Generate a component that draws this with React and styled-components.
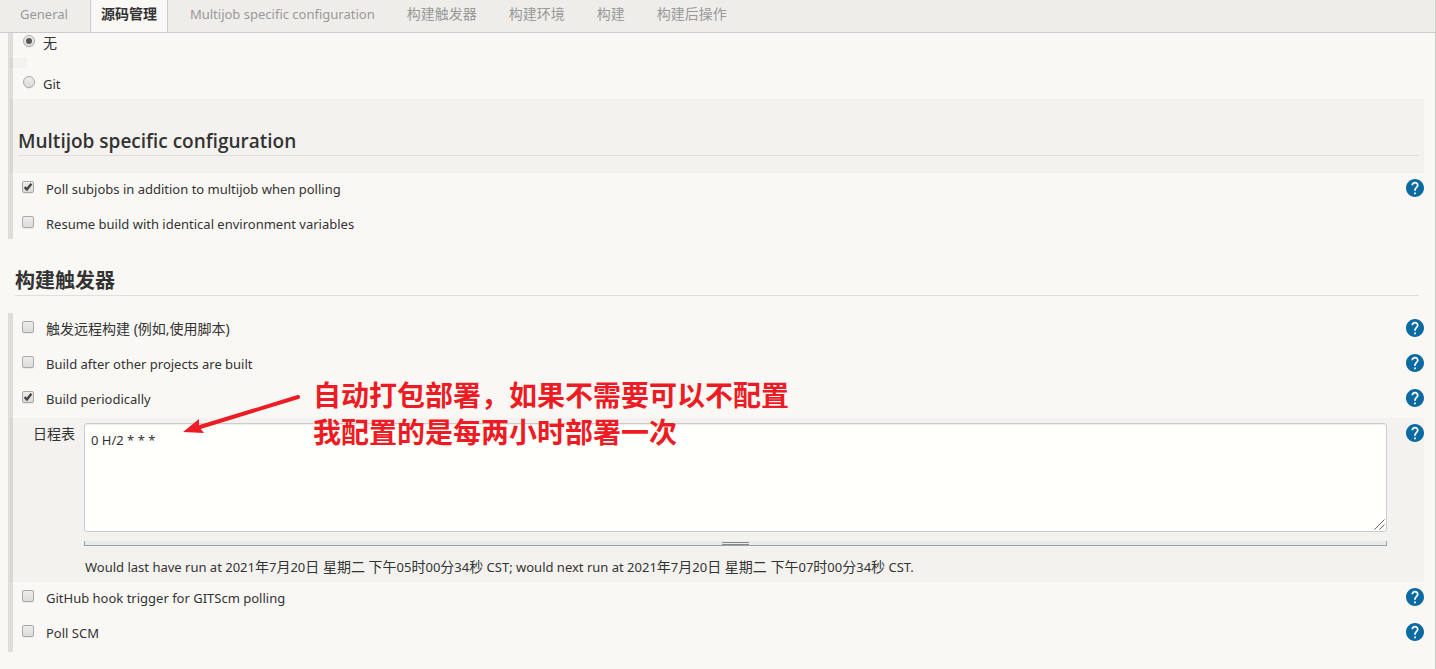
import React, { useState } from 'react';
import styled, { createGlobalStyle, css } from 'styled-components';

const colors = {
	page: '#f9f8f4',
	nav: '#eeede9',
	line: '#cccccc',
	rule: '#dfdeda',
	shade: 'rgba(0, 0, 0, 0.025)',
	text: '#333333',
	muted: '#999999',
	help: '#0b6aa2',
	note: '#ed1c24'
};

const GlobalStyle = createGlobalStyle`
	* {
		box-sizing: border-box;
	}

	body {
		margin: 0;
		background: ${colors.page};
		color: ${colors.text};
		font-family: 'Noto Sans', 'Noto Sans CJK SC', sans-serif;
		font-size: 13px;
		line-height: 20px;
	}
`;

const Page = styled.div`
	min-height: 100vh;
	border-right: 1px solid ${colors.line};
`;

const Tabs = styled.nav`
	position: sticky;
	top: 0;
	z-index: 2;
	display: flex;
	gap: 12px;
	height: 33px;
	padding-left: 10px;
	background: ${colors.nav};
	border-bottom: 1px solid ${colors.line};
`;

const Tab = styled.a`
	padding: 4px 10px 0;
	color: ${colors.muted};
	font-size: ${(props) => (props.$cjk ? '14px' : '13px')};
	text-decoration: none;
	white-space: nowrap;

	${(props) =>
		props.$active &&
		css`
			background: ${colors.page};
			border: solid ${colors.line};
			border-width: 0 1px;
			color: ${colors.text};
			font-weight: 700;
		`};
`;

/* the first rows are scrolled a little under the tabs */
const Form = styled.form`
	margin: -6px 11px 0 8px;
`;

const Section = styled.section`
	border-left: 5px solid ${colors.rule};
`;

const shaded = css`
	background: ${colors.shade};
	box-shadow: -3px 0 0 ${colors.shade};
`;

const TitleBar = styled.div`
	height: 74px;
	padding: 0 5px 17px;
	${(props) => (props.$shaded ? shaded : 'padding-left: 7px;')};
`;

const Title = styled.h2`
	display: flex;
	align-items: flex-end;
	height: 57px;
	margin: 0;
	padding-bottom: 1px;
	border-bottom: 1px solid ${colors.rule};
	font-family: 'Open Sans', 'Noto Sans CJK SC', sans-serif;
	font-size: ${(props) => (props.$cjk ? '20px' : '19px')};
	font-weight: ${(props) => (props.$cjk ? 700 : 600)};
	line-height: 26px;
`;

const Row = styled.div`
	display: flex;
	align-items: flex-start;
	height: ${(props) => (props.$help ? '35px' : '31px')};
	padding: 5px 0 0 ${(props) => (props.$radio ? '10px' : '9px')};
`;

const RowLabel = styled.label`
	flex: 1;
	padding: 1px 0 0 ${(props) => (props.$radio ? '8px' : '12px')};
	font-size: ${(props) => (props.$cjk ? '14px' : '13px')};
`;

const Spacer = styled.div`
	width: 14px;
	height: 10px;
	${shaded};
`;

const Box = styled.span`
	display: grid;
	width: 12px;
	height: 12px;
	margin-top: 3px;

	> * {
		grid-area: 1 / 1;
	}

	svg {
		pointer-events: none;
	}
`;

const Check = styled.input`
	appearance: none;
	width: 12px;
	height: 12px;
	margin: 0;
	border: 1px solid #a9a9a7;
	border-radius: ${(props) => (props.type === 'radio' ? '50%' : '2px')};
	background: linear-gradient(#ededeb, #dcdcda);
	box-shadow: 0 1px 0 rgba(0, 0, 0, 0.06);
`;

const HelpLink = styled.a`
	display: block;
	margin-top: 1px;
	color: ${colors.help};

	svg {
		display: block;
	}
`;

const Schedule = styled.div`
	position: relative;
	display: flex;
	align-items: flex-start;
	padding: 5px 0;
	${shaded};
`;

const ScheduleLabel = styled.label`
	width: 71px;
	padding: 1px 9px 0 0;
	font-size: 14px;
	text-align: right;
`;

const Field = styled.div`
	flex: 1;
	margin-right: 19px;
`;

const SpecBox = styled.div`
	position: relative;
`;

const Spec = styled.textarea`
	display: block;
	width: 100%;
	height: 109px;
	padding: 6px;
	border: 1px solid ${colors.line};
	border-radius: 3px;
	outline: none;
	background: #fffffc;
	box-shadow: inset 0 1px 1px rgba(0, 0, 0, 0.07);
	color: ${colors.text};
	font: inherit;
	resize: vertical;

	&::-webkit-resizer {
		background: transparent;
	}
`;

const Corner = styled.svg`
	position: absolute;
	right: 2px;
	bottom: 2px;
	pointer-events: none;
`;

const ResizeBar = styled.div`
	display: flex;
	justify-content: center;
	height: 5px;
	margin: 9px 0 11px;
	border: solid #98a3a8;
	border-width: 0 1px 1px;
	background: #e9ebea;
`;

const Grip = styled.span`
	width: 27px;
	height: 3px;
	margin-top: 1px;
	border: solid #888888;
	border-width: 1px 0;
`;

const RunTimes = styled.div`
	padding-left: 1px;
`;

const Cjk = styled.span`
	font-size: 14px;
`;

const Note = styled.div`
	position: absolute;
	top: -41px;
	left: 300px;
	z-index: 1;
	color: ${colors.note};
	font-size: 28px;
	font-weight: 700;
	line-height: 37px;
	white-space: nowrap;
	pointer-events: none;
`;

const Arrow = styled.svg`
	position: absolute;
	top: -26px;
	left: 169px;
	z-index: 1;
	pointer-events: none;
`;

const Help = () => (
	<HelpLink href="#help" aria-label="Help">
		<svg width="18" height="18" viewBox="2 2 20 20" fill="currentColor">
			<circle cx="12" cy="12" r="9" fill="#fff" />
			<path d="M12 2C6.48 2 2 6.48 2 12s4.48 10 10 10 10-4.48 10-10S17.52 2 12 2zm1 17h-2v-2h2v2zm2.07-7.75l-.9.92C13.45 12.9 13 13.5 13 15h-2v-.5c0-1.1.45-2.1 1.17-2.83l1.24-1.26c.37-.36.59-.86.59-1.41 0-1.1-.9-2-2-2s-2 .9-2 2H8c0-2.21 1.79-4 4-4s4 1.79 4 4c0 .88-.36 1.68-.93 2.25z" />
		</svg>
	</HelpLink>
);

const CheckRow = ({ id, label, cjk, help, defaultChecked }) => {
	const [checked, setChecked] = useState(!!defaultChecked);
	return (
		<Row $help={help}>
			<Box>
				<Check id={id} type="checkbox" checked={checked} onChange={() => setChecked(!checked)} />
				{checked ? (
					<svg width="12" height="12" viewBox="0 0 12 12" fill="none" stroke="#444" strokeWidth="2.4">
						<path d="M2.6 6.2l2.3 2.2L9.4 2.8" />
					</svg>
				) : null}
			</Box>
			<RowLabel htmlFor={id} $cjk={cjk}>
				{label}
			</RowLabel>
			{help ? <Help /> : null}
		</Row>
	);
};

const RadioRow = ({ id, label, cjk, checked, onChange }) => (
	<Row $radio>
		<Box>
			<Check id={id} type="radio" name="scm" checked={checked} onChange={onChange} />
			{checked ? (
				<svg width="12" height="12" viewBox="0 0 12 12">
					<circle cx="6" cy="6" r="3" fill="#555" />
				</svg>
			) : null}
		</Box>
		<RowLabel htmlFor={id} $radio $cjk={cjk}>
			{label}
		</RowLabel>
	</Row>
);

const App = () => {
	const [scm, setScm] = useState('none');
	const [spec, setSpec] = useState('0 H/2 * * *');

	return (
		<Page>
			<GlobalStyle />
			<Tabs>
				<Tab href="#general">General</Tab>
				<Tab href="#scm" $active $cjk>源码管理</Tab>
				<Tab href="#multijob">Multijob specific configuration</Tab>
				<Tab href="#triggers" $cjk>构建触发器</Tab>
				<Tab href="#environment" $cjk>构建环境</Tab>
				<Tab href="#build" $cjk>构建</Tab>
				<Tab href="#post-build" $cjk>构建后操作</Tab>
			</Tabs>
			<Form>
				<Section>
					<RadioRow id="scm-none" label="无" cjk checked={scm === 'none'} onChange={() => setScm('none')} />
					<Spacer />
					<RadioRow id="scm-git" label="Git" checked={scm === 'git'} onChange={() => setScm('git')} />
					<TitleBar $shaded>
						<Title>Multijob specific configuration</Title>
					</TitleBar>
					<CheckRow id="poll-subjobs" label="Poll subjobs in addition to multijob when polling" defaultChecked help />
					<CheckRow id="resume-build" label="Resume build with identical environment variables" />
				</Section>
				<TitleBar>
					<Title $cjk>构建触发器</Title>
				</TitleBar>
				<Section>
					<CheckRow id="remote" label="触发远程构建 (例如,使用脚本)" cjk help />
					<CheckRow id="after-other" label="Build after other projects are built" help />
					<CheckRow id="periodic" label="Build periodically" defaultChecked help />
					<Schedule>
						<ScheduleLabel htmlFor="spec">日程表</ScheduleLabel>
						<Field>
							<SpecBox>
								<Spec id="spec" value={spec} onChange={(e) => setSpec(e.target.value)} />
								<Corner width="11" height="11" viewBox="0 0 11 11" stroke="#666">
									<path d="M0.5 10.5L10.5 0.5M5.5 10.5L10.5 5.5" />
								</Corner>
							</SpecBox>
							<ResizeBar>
								<Grip />
							</ResizeBar>
							<RunTimes>
								Would last have run at 2021<Cjk>年</Cjk>7<Cjk>月</Cjk>20<Cjk>日 星期二 下午</Cjk>05<Cjk>时</Cjk>00<Cjk>分</Cjk>34<Cjk>秒</Cjk> CST; would next run at 2021<Cjk>年</Cjk>7<Cjk>月</Cjk>20<Cjk>日 星期二 下午</Cjk>07<Cjk>时</Cjk>00<Cjk>分</Cjk>34<Cjk>秒</Cjk> CST.
							</RunTimes>
						</Field>
						<Help />
						<Arrow width="122" height="46" viewBox="0 0 122 46">
							<path d="M116 5L18 35" stroke={colors.note} strokeWidth="4" strokeLinecap="round" />
							<path d="M1 40L17 27L17 35L22 41Z" fill={colors.note} />
						</Arrow>
						<Note>
							自动打包部署，如果不需要可以不配置
							<br />
							我配置的是每两小时部署一次
						</Note>
					</Schedule>
					<CheckRow id="github-hook" label="GitHub hook trigger for GITScm polling" help />
					<CheckRow id="poll-scm" label="Poll SCM" help />
				</Section>
			</Form>
		</Page>
	);
};

export default App;
